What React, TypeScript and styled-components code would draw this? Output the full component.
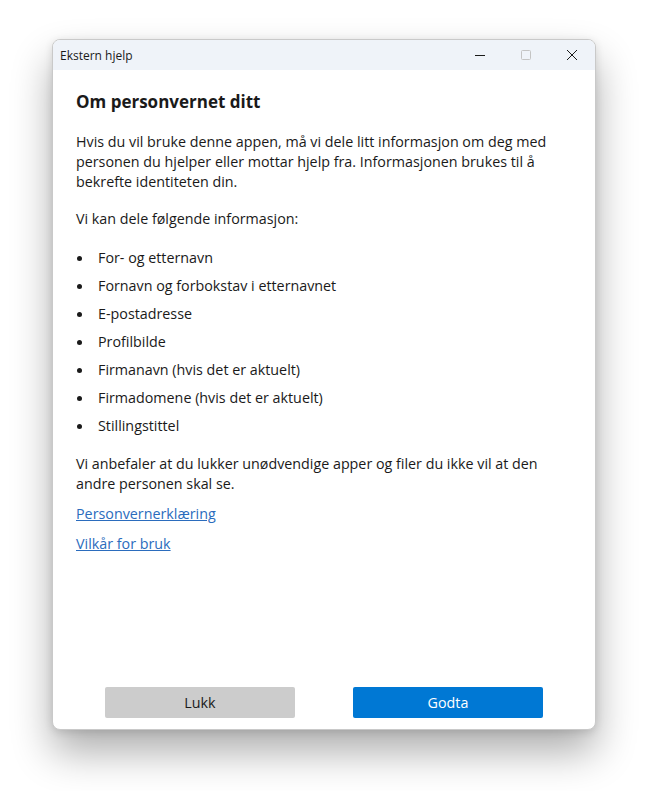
import React from 'react'
import styled, { createGlobalStyle } from 'styled-components'

const GlobalStyle = createGlobalStyle`
  html, body {
    margin: 0;
    padding: 0;
    background: #ffffff;
  }
  body {
    font-family: "Open Sans", "Noto Sans", "Liberation Sans", sans-serif;
  }
`

const items = [
  'For- og etternavn',
  'Fornavn og forbokstav i etternavnet',
  'E-postadresse',
  'Profilbilde',
  'Firmanavn (hvis det er aktuelt)',
  'Firmadomene (hvis det er aktuelt)',
  'Stillingstittel',
]

const App = () => {
  return (
    <Page>
      <GlobalStyle />
      <Window>
        <TitleBar>
          <Title>Ekstern hjelp</Title>
          <Controls>
            <CtrlButton>
              <svg width="12" height="12" viewBox="0 0 12 12">
                <path d="M1 6.5h10" stroke="#1a1a1a" strokeWidth="1" />
              </svg>
            </CtrlButton>
            <CtrlButton>
              <svg width="12" height="12" viewBox="0 0 12 12">
                <rect x="1.5" y="1.5" width="9" height="9" rx="1" fill="none" stroke="#c4c4c4" strokeWidth="1" />
              </svg>
            </CtrlButton>
            <CtrlButton>
              <svg width="12" height="12" viewBox="0 0 12 12">
                <path d="M1 1l10 10M11 1L1 11" stroke="#1a1a1a" strokeWidth="1" />
              </svg>
            </CtrlButton>
          </Controls>
        </TitleBar>
        <Body>
          <Heading>Om personvernet ditt</Heading>
          <Text>
            Hvis du vil bruke denne appen, må vi dele litt informasjon om deg med personen du
            hjelper eller mottar hjelp fra. Informasjonen brukes til å bekrefte identiteten din.
          </Text>
          <Text>Vi kan dele følgende informasjon:</Text>
          <List>
            {items.map((item) => (
              <Item key={item}>
                <Bullet />
                {item}
              </Item>
            ))}
          </List>
          <Text last>
            Vi anbefaler at du lukker unødvendige apper og filer du ikke vil at den andre personen
            skal se.
          </Text>
          <Link href="#">Personvernerklæring</Link>
          <Link href="#">Vilkår for bruk</Link>
        </Body>
        <Footer>
          <Button>Lukk</Button>
          <Button primary>Godta</Button>
        </Footer>
      </Window>
    </Page>
  )
}

export default App

const Page = styled.div`
  width: 671px;
  height: 791px;
  box-sizing: border-box;
  padding: 39px 0 0 52px;
`

const Window = styled.div`
  width: 544px;
  height: 691px;
  border-radius: 8px;
  background: #ffffff;
  border: 1px solid #c9c9c9;
  box-sizing: border-box;
  display: flex;
  flex-direction: column;
  overflow: hidden;
  box-shadow: 0 22px 40px rgba(0, 0, 0, 0.32), 0 2px 8px rgba(0, 0, 0, 0.12);
`

const TitleBar = styled.div`
  height: 30px;
  flex-shrink: 0;
  background: #eff3f9;
  display: flex;
  align-items: center;
  justify-content: space-between;
  padding-left: 7px;
`

const Title = styled.span`
  font-size: 12px;
  color: #1a1a1a;
`

const Controls = styled.div`
  display: flex;
  height: 100%;
`

const CtrlButton = styled.div`
  width: 46px;
  height: 100%;
  display: flex;
  align-items: center;
  justify-content: center;
`

const Body = styled.div`
  flex: 1;
  padding: 20px 24px 0 23px;
  display: flex;
  flex-direction: column;
  align-items: flex-start;
`

const Heading = styled.h1`
  margin: 0 0 18px;
  font-size: 17px;
  font-weight: 700;
  line-height: 24px;
  color: #1a1a1a;
`

const Text = styled.p<{ last?: boolean }>`
  margin: 0 0 ${(p) => (p.last ? '10px' : '17px')};
  font-size: 14.3px;
  line-height: 20px;
  color: #1a1a1a;
`

const List = styled.ul`
  margin: 2px 0 10px;
  padding: 0;
  list-style: none;
`

const Item = styled.li`
  display: flex;
  align-items: center;
  font-size: 14.3px;
  line-height: 20px;
  color: #1a1a1a;
  margin-bottom: 8px;
`

const Bullet = styled.span`
  width: 5px;
  height: 5px;
  border-radius: 50%;
  background: #1a1a1a;
  margin: 1px 16px 0 1px;
  flex-shrink: 0;
`

const Link = styled.a`
  display: block;
  font-size: 14.3px;
  line-height: 20px;
  color: #2b6cbd;
  text-decoration: underline;
  margin-bottom: 10px;
`

const Footer = styled.div`
  display: flex;
  justify-content: center;
  gap: 58px;
  padding-bottom: 11px;
`

const Button = styled.button<{ primary?: boolean }>`
  width: 190px;
  height: 31px;
  border: none;
  border-radius: 2px;
  font-family: inherit;
  font-size: 14.3px;
  background: ${(p) => (p.primary ? '#0078d4' : '#cccccc')};
  color: ${(p) => (p.primary ? '#ffffff' : '#1a1a1a')};
`
